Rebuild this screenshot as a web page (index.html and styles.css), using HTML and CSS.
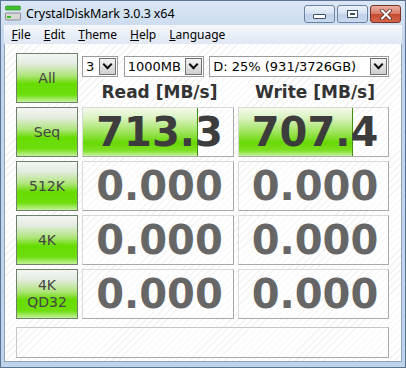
FILE: index.html
```html
<html>
<head>
  <title>CrystalDiskMark 3.0.3 x64</title>
  <link rel="stylesheet" href="styles.css">
</head>
<body>
  <div class="window">
    <div class="titlebar">
      <svg class="app-icon" width="16" height="16" viewBox="0 0 16 16">
        <rect x="0.5" y="1" width="15" height="4" rx="1" fill="#3fc12f" stroke="#2a8a20" stroke-width="0.6"/>
        <rect x="0.5" y="8" width="15" height="7" rx="1" fill="#d8d8d8" stroke="#777" stroke-width="0.8"/>
        <rect x="2" y="11" width="4" height="2" fill="#39c02a"/>
      </svg>
      <span class="title">CrystalDiskMark 3.0.3 x64</span>
      <div class="controls">
        <div class="ctl ctl-min"><span class="glyph-min"></span></div>
        <div class="ctl ctl-max"><span class="glyph-max"></span></div>
        <div class="ctl ctl-close">
          <svg width="14" height="11" viewBox="0 0 14 11">
            <path d="M3 1.5 L11 9.5 M11 1.5 L3 9.5" stroke="#4a2018" stroke-width="3.6" stroke-linecap="round"/>
            <path d="M3 1.5 L11 9.5 M11 1.5 L3 9.5" stroke="#fff" stroke-width="2.2" stroke-linecap="round"/>
          </svg>
        </div>
      </div>
    </div>

    <div class="menubar">
      <span class="menu-item"><u>F</u>ile</span>
      <span class="menu-item"><u>E</u>dit</span>
      <span class="menu-item"><u>T</u>heme</span>
      <span class="menu-item"><u>H</u>elp</span>
      <span class="menu-item"><u>L</u>anguage</span>
    </div>

    <div class="client">
      <div class="grid">
        <div class="btn">All</div>
        <div class="top">
          <div class="combos">
            <div class="combo combo-count"><span>3</span><i class="drop"></i></div>
            <div class="combo combo-size"><span>1000MB</span><i class="drop"></i></div>
            <div class="combo combo-drive"><span>D: 25% (931/3726GB)</span><i class="drop"></i></div>
          </div>
          <div class="heads">
            <span>Read [MB/s]</span>
            <span>Write [MB/s]</span>
          </div>
        </div>

        <div class="btn">Seq</div>
        <div class="cell"><div class="bar" style="width: 76%"></div><span class="val dark">713.3</span></div>
        <div class="cell"><div class="bar" style="width: 76%"></div><span class="val dark">707.4</span></div>

        <div class="btn">512K</div>
        <div class="cell"><span class="val">0.000</span></div>
        <div class="cell"><span class="val">0.000</span></div>

        <div class="btn">4K</div>
        <div class="cell"><span class="val">0.000</span></div>
        <div class="cell"><span class="val">0.000</span></div>

        <div class="btn two-line">4K<br>QD32</div>
        <div class="cell"><span class="val">0.000</span></div>
        <div class="cell"><span class="val">0.000</span></div>
      </div>
      <div class="status"></div>
    </div>
  </div>
</body>
</html>
```

FILE: styles.css
```css
/* Reset */
body {
  margin: 0;
  padding: 0;
  background: #fff;
}

/* Window frame */
.window {
  width: 406px;
  height: 368px;
  box-sizing: border-box;
  border: 1px solid #5d7595;
  background: linear-gradient(#dbe7f4, #c3d6ec 40px, #bfd3ea);
  padding: 0 3px 5px 3px;
  display: flex;
  flex-direction: column;
  font-family: "DejaVu Sans", Verdana, sans-serif;
}

/* Title bar */
.titlebar {
  height: 24px;
  display: flex;
  align-items: center;
  position: relative;
}

.app-icon {
  margin: 0 0 0 1px;
}

.title {
  margin-left: 5px;
  font-family: "Noto Sans", "Open Sans", sans-serif;
  font-size: 12.5px;
  color: #000;
  letter-spacing: -0.1px;
}

.controls {
  margin-left: auto;
  display: flex;
  gap: 2px;
  align-self: flex-start;
  margin-top: 4px;
  margin-right: 1px;
}

.ctl {
  width: 29px;
  height: 16px;
  border: 1px solid #6a83a3;
  border-radius: 3px;
  background: linear-gradient(#edf3fa, #d3e0ef 50%, #bfd1e8 51%, #c9daee);
  display: flex;
  align-items: center;
  justify-content: center;
}

.ctl-close {
  border-color: #7a3228;
  background: linear-gradient(#eab0a2, #d67a64 50%, #c44a30 51%, #d4664a);
}

.glyph-min {
  width: 11px;
  height: 3px;
  margin-top: 5px;
  background: #fff;
  border: 1px solid #3c4e66;
  border-radius: 1px;
}

.glyph-max {
  width: 9px;
  height: 6px;
  border: 1px solid #3c4e66;
  box-shadow: inset 0 0 0 2px #fff;
  background: #3c4e66;
}

/* Menu bar */
.menubar {
  height: 19px;
  display: flex;
  align-items: center;
  background: linear-gradient(#f4f7fb, #e0e8f4);
  padding-left: 1px;
}

.menu-item {
  font-family: "Noto Sans", "Open Sans", sans-serif;
  font-size: 12px;
  color: #000;
  padding: 0 6.5px;
}

/* Client area */
.client {
  flex: 1;
  border: 1px solid #8ea4c0;
  border-top: none;
  background: repeating-linear-gradient(135deg, #fff 0 4px, #f2f2f2 4px 5px);
  padding: 9px 8px 0 11px;
}

.grid {
  display: grid;
  grid-template-columns: 62px 152px 151px;
  grid-template-rows: repeat(5, 50px);
  column-gap: 4px;
  row-gap: 4px;
}

/* Test buttons */
.btn {
  box-sizing: border-box;
  border: 1px solid #6f806d;
  background: linear-gradient(#f4f6f3, #e4ece0 20%, #aee57a 45%, #66dc00 62%, #6ede0e 85%, #c4f29a);
  display: flex;
  align-items: center;
  justify-content: center;
  text-align: center;
  font-family: "DejaVu Sans", Verdana, sans-serif;
  font-size: 14px;
  color: #444;
  line-height: 17px;
}

/* Top area: combos + headers */
.top {
  grid-column: 2 / 4;
  display: flex;
  flex-direction: column;
}

.combos {
  display: flex;
  margin-top: 3px;
  gap: 6px;
}

.combo {
  box-sizing: border-box;
  height: 21px;
  border: 1px solid #9c9c9c;
  background: #fff;
  display: flex;
  align-items: center;
  justify-content: space-between;
  font-family: "DejaVu Sans", Tahoma, sans-serif;
  font-size: 13px;
  color: #000;
}

.combo span {
  padding-left: 3px;
}

.combo-count { width: 36px; }
.combo-size { width: 81px; }
.combo-drive { width: 181px; margin-left: -1px; }

.drop {
  width: 17px;
  height: 17px;
  margin-right: 1px;
  box-sizing: border-box;
  border: 1px solid #707070;
  background: linear-gradient(#f2f2f2, #e2e2e2 50%, #cfcfcf);
  position: relative;
}

.drop::after {
  content: "";
  position: absolute;
  left: 4px;
  top: 2px;
  width: 5px;
  height: 5px;
  border-right: 2px solid #111;
  border-bottom: 2px solid #111;
  transform: rotate(45deg);
}

.heads {
  display: grid;
  grid-template-columns: 152px 151px;
  column-gap: 4px;
  margin-top: 5px;
}

.heads span {
  text-align: center;
  font-family: "DejaVu Sans", Verdana, sans-serif;
  font-weight: bold;
  font-size: 17px;
  color: #333;
  padding-left: 3px;
}

/* Result cells */
.cell {
  position: relative;
  box-sizing: border-box;
  border: 1px solid;
  border-color: #d9d9d9 #a9a9a9 #a9a9a9 #d9d9d9;
  background: repeating-linear-gradient(135deg, #fff 0 4px, #f5f5f5 4px 5px);
  display: flex;
  align-items: center;
  justify-content: center;
  overflow: hidden;
}

.bar {
  position: absolute;
  left: 0;
  top: 0;
  bottom: 0;
  border-right: 1px solid #3f8f12;
  background: linear-gradient(#f3fae9, #dcf3c4 20%, #9fe45c 50%, #68d806 72%, #7ddf22 88%, #c7f39d);
}

.val {
  position: relative;
  font-family: "DejaVu Sans", Verdana, sans-serif;
  font-weight: bold;
  font-size: 40px;
  color: #666;
  padding-left: 3px;
}

.val.dark {
  color: #3c3c3c;
}

/* Status bar */
.status {
  margin-top: 8px;
  width: 373px;
  height: 31px;
  box-sizing: border-box;
  border: 1px solid;
  border-color: #c8c8c8 #a9a9a9 #a9a9a9 #c8c8c8;
  background: repeating-linear-gradient(135deg, #fff 0 4px, #f5f5f5 4px 5px);
}
```
